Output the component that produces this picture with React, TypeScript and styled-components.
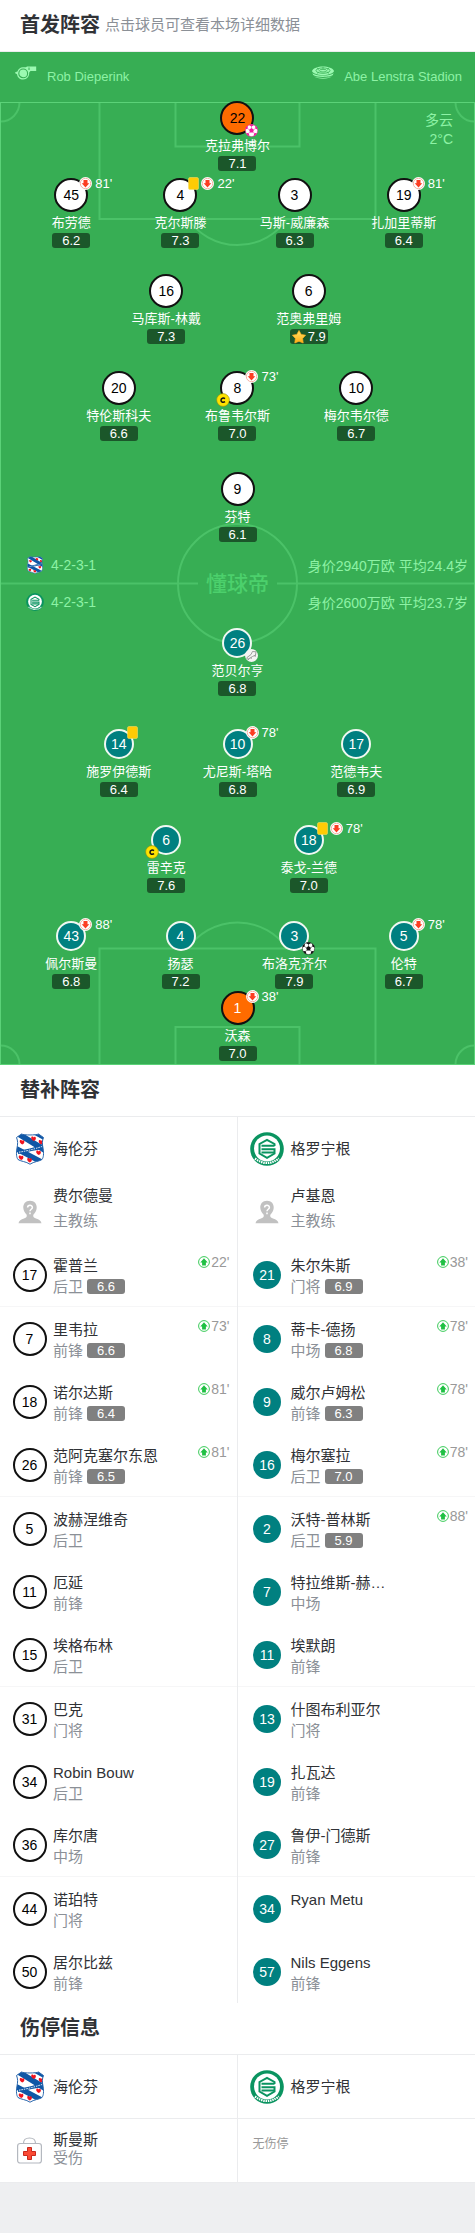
import React from "react";
import styled, { createGlobalStyle, css } from "styled-components";

const GlobalStyle = createGlobalStyle`
  * { box-sizing: border-box; }
  body {
    margin: 0;
    background: #eeeff1;
    font-family: "Liberation Sans", "Noto Sans CJK SC", sans-serif;
    color: #303236;
  }
  button { font: inherit; }
`;

type Side = "home" | "away";

interface Starter {
  no: number;
  name: string;
  rating: string;
  off?: string;
  card?: boolean;
  captain?: boolean;
  star?: boolean;
  keeper?: boolean;
  extra?: "own" | "assist" | "goal";
}

interface Line {
  after: number;
  players: Starter[];
}

interface Sub {
  no: number;
  name: string;
  role?: string;
  rating?: string;
  on?: string;
}

const homeLines: Line[] = [
  { after: 7, players: [{ no: 22, name: "克拉弗博尔", rating: "7.1", keeper: true, extra: "own" }] },
  {
    after: 26,
    players: [
      { no: 45, name: "布劳德", rating: "6.2", off: "81'" },
      { no: 4, name: "克尔斯滕", rating: "7.3", card: true, off: "22'" },
      { no: 3, name: "马斯-威廉森", rating: "6.3" },
      { no: 19, name: "扎加里蒂斯", rating: "6.4", off: "81'" },
    ],
  },
  {
    after: 27,
    players: [
      { no: 16, name: "马库斯-林戴", rating: "7.3" },
      { no: 6, name: "范奥弗里姆", rating: "7.9", star: true },
    ],
  },
  {
    after: 31,
    players: [
      { no: 20, name: "特伦斯科夫", rating: "6.6" },
      { no: 8, name: "布鲁韦尔斯", rating: "7.0", captain: true, off: "73'" },
      { no: 10, name: "梅尔韦尔德", rating: "6.7" },
    ],
  },
  { after: 0, players: [{ no: 9, name: "芬特", rating: "6.1" }] },
];

const awayLines: Line[] = [
  { after: 31, players: [{ no: 26, name: "范贝尔亨", rating: "6.8", extra: "assist" }] },
  {
    after: 26,
    players: [
      { no: 14, name: "施罗伊德斯", rating: "6.4", card: true },
      { no: 10, name: "尤尼斯-塔哈", rating: "6.8", off: "78'" },
      { no: 17, name: "范德韦夫", rating: "6.9" },
    ],
  },
  {
    after: 26,
    players: [
      { no: 6, name: "雷辛克", rating: "7.6", captain: true },
      { no: 18, name: "泰戈-兰德", rating: "7.0", card: true, off: "78'" },
    ],
  },
  {
    after: 2,
    players: [
      { no: 43, name: "佩尔斯曼", rating: "6.8", off: "88'" },
      { no: 4, name: "扬瑟", rating: "7.2" },
      { no: 3, name: "布洛克齐尔", rating: "7.9", extra: "goal" },
      { no: 5, name: "伦特", rating: "6.7", off: "78'" },
    ],
  },
  { after: 4, players: [{ no: 1, name: "沃森", rating: "7.0", keeper: true, off: "38'" }] },
];

const homeSubs: Sub[] = [
  { no: 17, name: "霍普兰", role: "后卫", rating: "6.6", on: "22'" },
  { no: 7, name: "里韦拉", role: "前锋", rating: "6.6", on: "73'" },
  { no: 18, name: "诺尔达斯", role: "前锋", rating: "6.4", on: "81'" },
  { no: 26, name: "范阿克塞尔东恩", role: "前锋", rating: "6.5", on: "81'" },
  { no: 5, name: "波赫涅维奇", role: "后卫" },
  { no: 11, name: "厄延", role: "前锋" },
  { no: 15, name: "埃格布林", role: "后卫" },
  { no: 31, name: "巴克", role: "门将" },
  { no: 34, name: "Robin Bouw", role: "后卫" },
  { no: 36, name: "库尔唐", role: "中场" },
  { no: 44, name: "诺珀特", role: "门将" },
  { no: 50, name: "居尔比兹", role: "前锋" },
];

const awaySubs: Sub[] = [
  { no: 21, name: "朱尔朱斯", role: "门将", rating: "6.9", on: "38'" },
  { no: 8, name: "蒂卡-德扬", role: "中场", rating: "6.8", on: "78'" },
  { no: 9, name: "威尔卢姆松", role: "前锋", rating: "6.3", on: "78'" },
  { no: 16, name: "梅尔塞拉", role: "后卫", rating: "7.0", on: "78'" },
  { no: 2, name: "沃特-普林斯", role: "后卫", rating: "5.9", on: "88'" },
  { no: 7, name: "特拉维斯-赫…", role: "中场" },
  { no: 11, name: "埃默朗", role: "前锋" },
  { no: 13, name: "什图布利亚尔", role: "门将" },
  { no: 19, name: "扎瓦达", role: "前锋" },
  { no: 27, name: "鲁伊-门德斯", role: "前锋" },
  { no: 34, name: "Ryan Metu" },
  { no: 57, name: "Nils Eggens", role: "前锋" },
];

/* ---------- page ---------- */

const Page = styled.main`
  padding-bottom: 50px;
`;

const SectionHead = styled.header`
  display: flex;
  align-items: center;
  gap: 5px;
  height: 52px;
  padding: 0 20px 2px;
  background: #fff;
  border-bottom: 1px solid #ebecee;
`;

const SectionTitle = styled.h2`
  margin: 0;
  font-size: 20px;
  line-height: 28px;
  font-weight: 700;
`;

const SectionHint = styled.span`
  font-size: 15px;
  line-height: 22px;
  color: #8b9097;
`;

/* ---------- pitch ---------- */

const Pitch = styled.section`
  background: #37ae54;
  color: #fff;
`;

const MatchInfo = styled.div`
  display: flex;
  justify-content: space-between;
  height: 49px;
  padding: 14px 13px 0 15px;
  font-size: 13px;
  line-height: 22px;
  color: #8df2a5;
`;

const InfoItem = styled.div`
  display: flex;
  gap: 10px;
`;

const Field = styled.div`
  display: flow-root;
  position: relative;
`;

const Markings = styled.svg`
  position: absolute;
  inset: 0;
  width: 100%;
  height: 100%;
`;

const Weather = styled.div`
  position: absolute;
  top: 10px;
  right: 22px;
  font-size: 14px;
  line-height: 19px;
  text-align: right;
  color: #8df2a5;
`;

const columns: Record<number, string> = {
  1: "100%",
  2: "30% 30%",
  3: "25% 25% 25%",
  4: "22% 24% 24% 22%",
};

const LineRow = styled.div<{ $count: number; $after: number }>`
  position: relative;
  display: grid;
  grid-template-columns: ${(p) => columns[p.$count]};
  justify-content: center;
  justify-items: center;
  margin-bottom: ${(p) => p.$after}px;
`;

const PlayerButton = styled.button`
  position: relative;
  display: flex;
  flex-direction: column;
  align-items: center;
  width: max-content;
  height: 70px;
  padding: 0;
  border: 0;
  background: none;
  color: #fff;
  cursor: pointer;
`;

const Slot = styled.span`
  position: relative;
  display: flex;
  align-items: center;
  justify-content: center;
  width: 34px;
  height: 34px;
`;

const Shirt = styled.span<{ $side: Side; $keeper?: boolean; $flat?: boolean }>`
  display: flex;
  align-items: center;
  justify-content: center;
  border-radius: 50%;
  font-size: 14px;
  line-height: 16px;
  ${(p) =>
    p.$side === "home" || p.$keeper
      ? css`
          width: 34px;
          height: 34px;
          border: 2px solid #111;
          background: ${p.$keeper ? "#ff6b00" : "#fff"};
          color: ${p.$side === "home" ? "#000" : "#fff"};
        `
      : css`
          width: ${p.$flat ? 28 : 30}px;
          height: ${p.$flat ? 28 : 30}px;
          border: ${p.$flat ? "0" : "2px solid #f0f8f2"};
          background: #008080;
          color: #fff;
        `}
`;

const PlayerName = styled.span`
  height: 21px;
  font-size: 13px;
  line-height: 21px;
  white-space: nowrap;
`;

const Rating = styled.span<{ $tone: "pitch" | "bench" }>`
  display: flex;
  align-items: center;
  justify-content: center;
  gap: 2px;
  width: 38px;
  height: 15px;
  border-radius: 3px;
  font-size: 13px;
  line-height: 15px;
  color: #fff;
  background: ${(p) => (p.$tone === "pitch" ? "rgba(0, 0, 0, 0.5)" : "#808080")};
`;

const Events = styled.span`
  position: absolute;
  left: 25px;
  top: -1px;
  display: flex;
  align-items: center;
  gap: 2px;
  height: 13px;
  font-size: 13px;
  line-height: 13px;
  svg { flex: none; }
`;

const Minute = styled.span`
  margin-left: 1px;
`;

const CornerBadge = styled.span<{ $at: "left" | "right" }>`
  position: absolute;
  bottom: -2px;
  ${(p) => p.$at}: -4px;
  display: flex;
`;

const Midfield = styled.div`
  position: relative;
  display: grid;
  grid-template-columns: 1fr auto 1fr;
  align-items: center;
  height: 84px;
`;

const TeamFacts = styled.div<{ $align: "start" | "end" }>`
  display: grid;
  grid-auto-rows: 37px;
  align-items: center;
  justify-content: ${(p) => p.$align};
  padding: ${(p) => (p.$align === "start" ? "0 0 2px 26px" : "0 7px 2px 0")};
  font-size: 14px;
  white-space: nowrap;
  color: #8df2a5;
`;

const Shape = styled.span`
  display: flex;
  align-items: center;
  gap: 7px;
`;

const Watermark = styled.strong`
  font-size: 21px;
  line-height: 24px;
  font-weight: 500;
  color: #4cd06c;
`;

/* ---------- lists ---------- */

const TwoColumns = styled.div`
  display: grid;
  grid-template-columns: 1fr 1fr;
  background: #fff;
`;

const List = styled.ul<{ $divided?: boolean }>`
  margin: 0;
  padding: 0;
  list-style: none;
  min-width: 0;
  &:first-child { border-right: 1px solid #ebecee; }
  ${(p) =>
    p.$divided
      ? css`
          > li { height: 64px; border-bottom: 1px solid #ebecee; }
        `
      : css`
          > li { height: 63px; }
          > li:nth-child(3n) { height: 64px; border-bottom: 1px solid #f6f6f7; }
        `}
`;

const Row = styled.li`
  position: relative;
  display: flex;
  gap: 6px;
  padding-left: 12px;
`;

const Media = styled.span`
  display: flex;
  align-items: center;
  justify-content: center;
  width: 35px;
  height: 63px;
  flex: none;
`;

const Texts = styled.div<{ $lead: number; $top: number }>`
  padding-top: ${(p) => p.$top}px;
  font-size: 15px;
  line-height: ${(p) => p.$lead}px;
`;

const Name = styled.div`
  white-space: nowrap;
`;

const Role = styled.div`
  display: flex;
  align-items: center;
  gap: 4px;
  color: #8b9097;
`;

const SubOn = styled.span`
  position: absolute;
  top: 12px;
  right: 7px;
  display: flex;
  align-items: center;
  gap: 1px;
  font-size: 14px;
  line-height: 14px;
  color: #999;
`;

const Empty = styled.p`
  margin: 0;
  padding: 16px 3px;
  font-size: 12px;
  line-height: 18px;
  color: #999;
`;

/* ---------- drawings ---------- */

const Whistle = () => (
  <svg width="22" height="14" viewBox="0 0 22 14" fill="none" aria-hidden="true">
    <path d="M8 1.2H11L12 .5H21.2V5H15.5L14.2 6.5C14.4 10.3 12 13.5 8.2 13.5C4.7 13.5 2.4 11.3 2 8.2L.2 7.2V6.2L2.4 5.6C3.2 2.8 5.4 1.2 8 1.2Z" fill="#9bf9b1" />
    <circle cx="8.2" cy="7.4" r="4.4" stroke="#37ae54" strokeWidth="1.1" />
    <circle cx="8.2" cy="7.4" r="2.8" fill="#9bf9b1" />
    <path d="M14 1.5V4" stroke="#37ae54" />
  </svg>
);

const StadiumIcon = () => (
  <svg width="22" height="14" viewBox="0 0 22 14" fill="none" aria-hidden="true">
    <path d="M0 5C1 2 6 .5 11 .5S21 2 22 5C21.600 7 17 9 11 9S.4 7 0 5Z" fill="#9bf9b1" />
    <path d="M.4 7.200C4 10.300 18 10.300 21.600 7.200L20.800 9C18 11.500 4 11.500 1.200 9ZM2 10.300C6 12.500 16 12.500 20 10.300C17 13.500 5 13.500 2 10.300Z" fill="#9bf9b1" />
    <ellipse cx="11" cy="4.600" rx="7" ry="2.700" stroke="#37ae54" strokeWidth=".8" />
    <ellipse cx="11" cy="4.700" rx="3.800" ry="1.300" stroke="#37ae54" strokeWidth=".8" />
    <path d="M5 2L7 3.500M17 2L15 3.500M11 1V3M5 7.300L7 6M17 7.300L15 6" stroke="#37ae54" strokeWidth=".7" />
  </svg>
);

const HomeCrest = ({ size }: { size: number }) => {
  const id = React.useId();
  const shape = "M6.500 1C9 2.300 21 2.300 23.500 1L28.500 4.500C27 8 27.200 11 28 15C29 21 28.500 24.500 27 26.500C24 28.500 19 28.500 15 31.200C11 28.500 6 28.500 3 26.500C1.500 24.500 1 21 2 15C2.800 11 3 8 1.500 4.500Z";
  const hearts = [[7, 9], [18.500, 5.500], [26, 9], [23.500, 19.500], [6, 24.500], [14.500, 27]];
  return (
    <svg width={size} height={size} viewBox="0 0 30 32" role="img" aria-label="海伦芬">
      <defs>
        <clipPath id={id}>
          <path d={shape} />
        </clipPath>
      </defs>
      <g clipPath={`url(#${id})`}>
        <path d="M0 0H30V32H0Z" fill="#fff" />
        <path d="M4-2L34 16V23L-2 1ZM20-3L34 5V10L16 0ZM-2 11L34 30V36L-2 17ZM-2 24L16 33H-2Z" fill="#0f57a6" />
        {hearts.map(([x, y]) => (
          <path key={`${x}-${y}`} transform={`translate(${x} ${y})`} d="M-2.200-1.500C-1-2.500 0-1.500 0-1C.5-2 2.500-2 2.400 0C2.200 1.500 1 2 .5 2.500C-1 2-2.800.5-2.200-1.500Z" fill="#f0131e" />
        ))}
        <path d="M3 17Q14 17 28 11V16Q15 18 3 21Z" fill="#0f57a6" />
        <path d="M4 19.200Q15 17.500 27 13.500" stroke="#fff" strokeWidth="1" strokeDasharray="1.500 1" fill="none" />
      </g>
      <path d={shape} fill="none" stroke="#2a67ad" strokeWidth="1" />
    </svg>
  );
};

const AwayCrest = ({ size }: { size: number }) => (
  <svg width={size} height={size} viewBox="0 0 34 34" fill="none" role="img" aria-label="格罗宁根">
    <circle cx="17" cy="17" r="16.800" fill="#0a9460" />
    <circle cx="17" cy="16.500" r="13" fill="#fff" />
    <path d="M24.500 14V12L17 7.800L9.500 12V21.500L17 25.800L24.500 21.500V17.200H11.500" stroke="#0a9460" strokeWidth="2" />
    <path d="M11.500 13.800H24.500M11.500 20.500H24" stroke="#0a9460" strokeWidth="2" />
    <path d="M5 26.500Q17 35.500 29 26.500" stroke="#fff" strokeWidth="2.200" strokeDasharray="1.500 .8" />
  </svg>
);

const OffIcon = () => (
  <svg width="13" height="13" viewBox="0 0 13 13" aria-hidden="true">
    <circle cx="6.500" cy="6.500" r="6.500" fill="#fff" />
    <circle cx="6.500" cy="6.500" r="5.200" fill="none" stroke="#f5a08f" strokeWidth=".8" />
    <path d="M4.500 3H8.500V6.200H10.300L6.500 10.400L2.700 6.200H4.500Z" fill="#fc3d22" />
  </svg>
);

const OnIcon = () => (
  <svg width="12" height="12" viewBox="0 0 12 12" aria-hidden="true">
    <circle cx="6" cy="6" r="5.400" fill="#fff" stroke="#3ccb5a" />
    <path d="M4.100 9.400H7.900V6.400H9.700L6 2.200L2.300 6.400H4.100Z" fill="#1fc043" />
  </svg>
);

const CardIcon = () => (
  <svg width="11" height="13" viewBox="0 0 11 13" aria-hidden="true">
    <rect x=".5" y=".5" width="10" height="12" rx="1.500" fill="#ffcb05" stroke="#f3dc62" strokeWidth=".6" />
  </svg>
);

const CaptainIcon = () => (
  <svg width="14" height="14" viewBox="0 0 14 14" fill="none" aria-hidden="true">
    <circle cx="7" cy="7" r="6.400" fill="#ffe200" stroke="#8a8a10" strokeWidth=".6" />
    <path d="M9 5.600C7.500 4.500 5 5 5 7.200S7.500 9.800 9 8.700" stroke="#111" strokeWidth="1.500" />
  </svg>
);

const BallIcon = ({ color }: { color: string }) => (
  <svg width="13" height="13" viewBox="0 0 13 13" aria-hidden="true">
    <circle cx="6.500" cy="6.500" r="6.100" fill="#fff" stroke={color} strokeWidth=".5" />
    <path d="M6.500 4L8.900 5.700L8 8.600H5L4.100 5.700ZM3.800.9L6.500 2.500L9.200.9Q6.500-.2 3.800.9ZM.4 5.600L2.700 4.500L2.700 1.600L1 3.300ZM12.600 5.600L10.300 4.500L10.300 1.600L12 3.300ZM1 9.200L3.500 9L4.500 11.800L3 11.800ZM12 9.200L9.500 9L8.500 11.800L10 11.800Z" fill={color} />
    <path d="M6.500 4.300V2M8.600 5.800L10.700 4.300M7.800 8.300L9.600 9.200M5.200 8.300L3.400 9.200M4.400 5.800L2.300 4.300" stroke={color} strokeWidth=".5" />
  </svg>
);

const AssistIcon = () => (
  <svg width="13" height="13" viewBox="0 0 13 13" fill="none" aria-hidden="true">
    <circle cx="6.500" cy="6.500" r="6.500" fill="#f4f4f4" />
    <path d="M2 8.500L6 5.500L7.500 2.500L11 2.800L10.500 6L7.500 7.500L3 10.200L1.800 9.600ZM3.200 11L4.200 9.700M6 10L6.500 8.500M10.500 6L10 8" stroke="#888" strokeWidth=".8" />
  </svg>
);

const StarIcon = () => {
  const id = React.useId();
  return (
    <svg width="14" height="14" viewBox="0 0 14 14" aria-hidden="true">
      <defs>
        <linearGradient id={id} x1="0" y1="0" x2="0" y2="1">
          <stop stopColor="#ffe36a" />
          <stop offset="1" stopColor="#ffab12" />
        </linearGradient>
      </defs>
      <path d="M7 .5L9.200 4.400L13.600 5.200L10.600 8.500L11.200 13L7 11.200L2.800 13L3.400 8.500L.4 5.200L4.800 4.400Z" fill={`url(#${id})`} stroke="#ffb020" strokeWidth=".7" strokeLinejoin="round" />
    </svg>
  );
};

const CoachIcon = () => (
  <svg width="24" height="24" viewBox="0 0 24 24" fill="none" aria-hidden="true">
    <path d="M12 .8C7.500.8 5 4 5.300 8C5.500 11 7 13 8.500 14.500C9.300 16.500 8.500 17.500 6 18.500C3 19.500 1 20.500.5 23.200H23.500C23 20.500 21 19.500 18 18.500C15.500 17.500 14.700 16.500 15.500 14.500C17 13 18.500 11 18.700 8C19 4 16.500.8 12 .8Z" fill="#c1c1c1" />
    <path d="M9.600 7.600C9.600 4.600 14.400 4.600 14.400 7.400C14.400 9.200 12 9.300 12 11.200M12 12.600V14.200" stroke="#fff" strokeWidth="1.500" />
  </svg>
);

const MedicalKit = () => (
  <svg width="25" height="27" viewBox="0 0 25 27" fill="none" aria-hidden="true">
    <path d="M6.500 6.500C6.500 2.500 8 1 12.500 1S18.500 2.500 18.500 6.500" stroke="#b4b8bf" strokeWidth="1.200" />
    <rect x=".6" y="6.500" width="23.800" height="19.500" rx="2.500" fill="#fff" stroke="#b4b8bf" strokeWidth="1.200" />
    <path d="M10.500 10.500H14.500V14.500H18.500V18.500H14.500V22.500H10.500V18.500H6.500V14.500H10.500Z" fill="#fb4a34" stroke="#c8281c" />
  </svg>
);

const PitchLines = () => (
  <Markings viewBox="0 0 475 964" preserveAspectRatio="none" fill="none" aria-hidden="true">
    <g stroke="#4bc268" strokeWidth="2">
      <path d="M99.500 1V118H375.500V1M175.500 1V45.500H299.500V1M188 118A60 60 0 0 0 287 118" />
      <path d="M99.500 963V847.500H375.500V963M175.500 963V926H299.500V963M188 847.500A60 60 0 0 1 287 847.500" />
      <path d="M0 20.500A19 19 0 0 0 19.500 1M475 20.500A19 19 0 0 1 455.500 1M0 944.500A19 19 0 0 1 19.500 963M475 944.500A19 19 0 0 0 455.500 963" />
      <path d="M1 482.500H198M277 482.500H474" />
      <circle cx="237.500" cy="482.500" r="59.500" />
    </g>
    <rect x=".5" y="1.500" width="474" height="962" stroke="#5bd278" />
  </Markings>
);

/* ---------- composition ---------- */

const extras = {
  own: <BallIcon color="#f0189b" />,
  goal: <BallIcon color="#111" />,
  assist: <AssistIcon />,
};

const PitchPlayer = ({ player, side }: { player: Starter; side: Side }) => (
  <PlayerButton type="button">
    <Slot>
      <Shirt $side={side} $keeper={player.keeper}>{player.no}</Shirt>
      {(player.card || player.off) && (
        <Events>
          {player.card && <CardIcon />}
          {player.off && (
            <>
              <OffIcon />
              <Minute>{player.off}</Minute>
            </>
          )}
        </Events>
      )}
      {player.captain && <CornerBadge $at="left"><CaptainIcon /></CornerBadge>}
      {player.extra && <CornerBadge $at="right">{extras[player.extra]}</CornerBadge>}
    </Slot>
    <PlayerName>{player.name}</PlayerName>
    <Rating $tone="pitch">
      {player.star && <StarIcon />}
      {player.rating}
    </Rating>
  </PlayerButton>
);

const Formation = ({ lines, side }: { lines: Line[]; side: Side }) => (
  <>
    {lines.map((line, i) => (
      <LineRow key={i} $count={line.players.length} $after={line.after}>
        {line.players.map((p) => (
          <PitchPlayer key={p.no} player={p} side={side} />
        ))}
      </LineRow>
    ))}
  </>
);

const TeamRow = ({ side }: { side: Side }) => (
  <Row>
    <Media>{side === "home" ? <HomeCrest size={32} /> : <AwayCrest size={34} />}</Media>
    <Texts $lead={21} $top={21}>
      <Name>{side === "home" ? "海伦芬" : "格罗宁根"}</Name>
    </Texts>
  </Row>
);

const Bench = ({ side, coach, subs }: { side: Side; coach: string; subs: Sub[] }) => (
  <List>
    <TeamRow side={side} />
    <Row>
      <Media><CoachIcon /></Media>
      <Texts $lead={25} $top={3}>
        <Name>{coach}</Name>
        <Role>主教练</Role>
      </Texts>
    </Row>
    {subs.map((s) => (
      <Row key={s.no}>
        <Media><Shirt $side={side} $flat>{s.no}</Shirt></Media>
        <Texts $lead={21} $top={12}>
          <Name>{s.name}</Name>
          {s.role && (
            <Role>
              {s.role}
              {s.rating && <Rating $tone="bench">{s.rating}</Rating>}
            </Role>
          )}
        </Texts>
        {s.on && <SubOn><OnIcon />{s.on}</SubOn>}
      </Row>
    ))}
  </List>
);

export default function App() {
  return (
    <Page>
      <GlobalStyle />
      <SectionHead>
        <SectionTitle>首发阵容</SectionTitle>
        <SectionHint>点击球员可查看本场详细数据</SectionHint>
      </SectionHead>
      <Pitch>
        <MatchInfo>
          <InfoItem><Whistle />Rob Dieperink</InfoItem>
          <InfoItem><StadiumIcon />Abe Lenstra Stadion</InfoItem>
        </MatchInfo>
        <Field>
          <PitchLines />
          <Weather>多云<br />2°C</Weather>
          <Formation lines={homeLines} side="home" />
          <Midfield>
            <TeamFacts $align="start">
              <Shape><HomeCrest size={18} />4-2-3-1</Shape>
              <Shape><AwayCrest size={18} />4-2-3-1</Shape>
            </TeamFacts>
            <Watermark>懂球帝</Watermark>
            <TeamFacts $align="end">
              <span>身价2940万欧 平均24.4岁</span>
              <span>身价2600万欧 平均23.7岁</span>
            </TeamFacts>
          </Midfield>
          <Formation lines={awayLines} side="away" />
        </Field>
      </Pitch>
      <section>
        <SectionHead><SectionTitle>替补阵容</SectionTitle></SectionHead>
        <TwoColumns>
          <Bench side="home" coach="费尔德曼" subs={homeSubs} />
          <Bench side="away" coach="卢基恩" subs={awaySubs} />
        </TwoColumns>
      </section>
      <section>
        <SectionHead><SectionTitle>伤停信息</SectionTitle></SectionHead>
        <TwoColumns>
          <List $divided>
            <TeamRow side="home" />
            <Row>
              <Media><MedicalKit /></Media>
              <Texts $lead={18} $top={12}>
                <Name>斯曼斯</Name>
                <Role>受伤</Role>
              </Texts>
            </Row>
          </List>
          <List $divided>
            <TeamRow side="away" />
            <Row><Empty>无伤停</Empty></Row>
          </List>
        </TwoColumns>
      </section>
    </Page>
  );
}
